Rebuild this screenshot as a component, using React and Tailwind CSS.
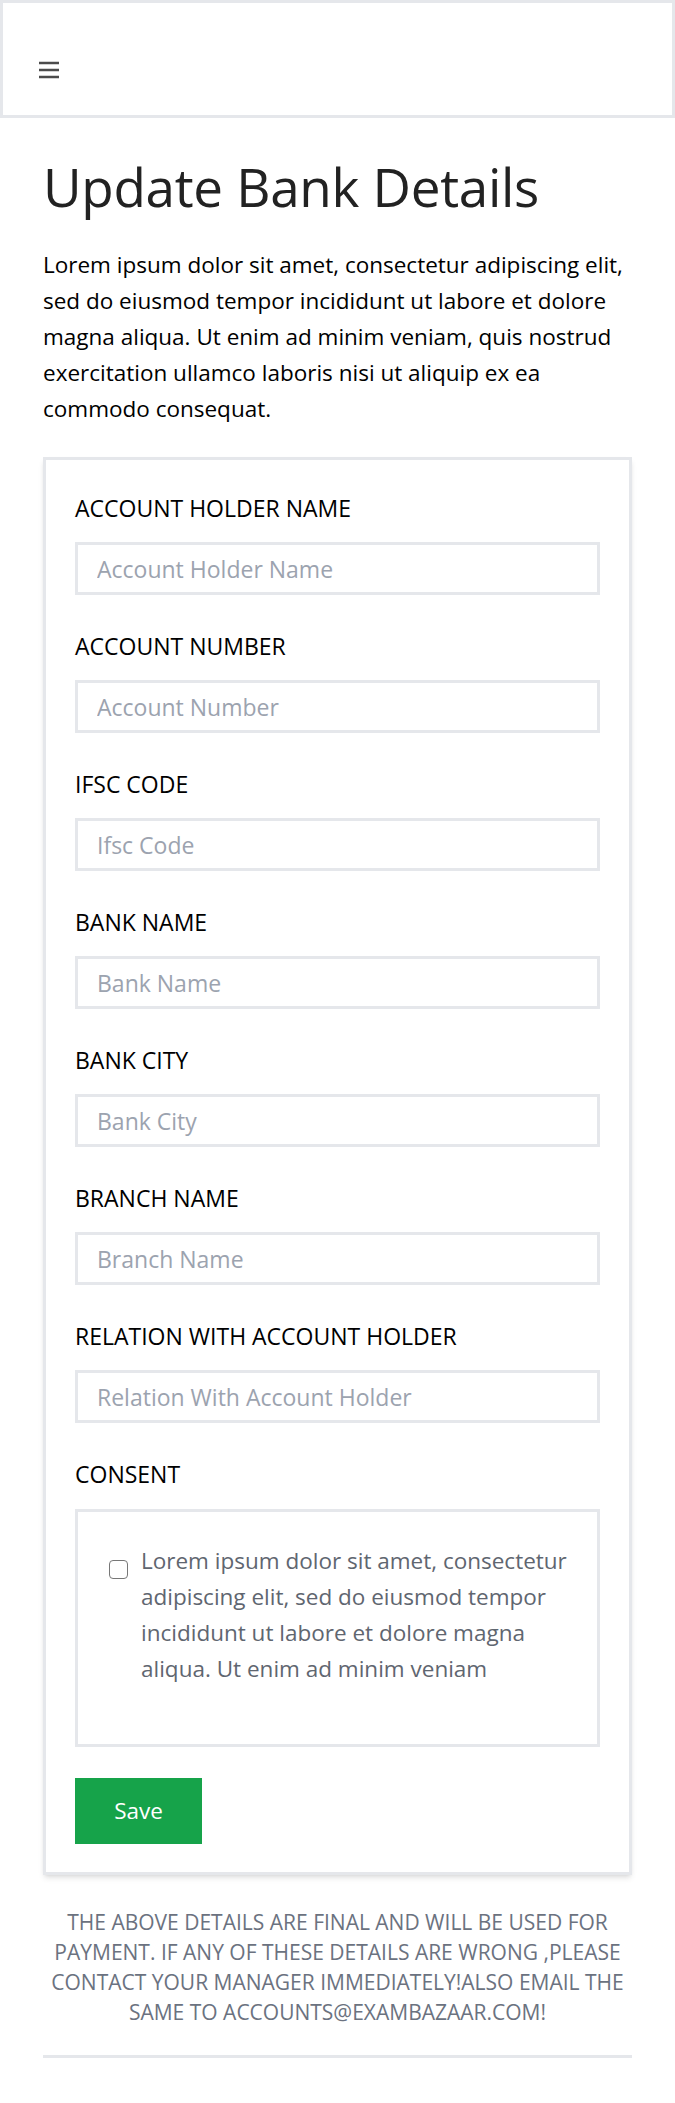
import React from 'react';

const FIELDS = [
  'Account Holder Name',
  'Account Number',
  'Ifsc Code',
  'Bank Name',
  'Bank City',
  'Branch Name',
  'Relation With Account Holder'
];

function Hamburger() {
  return (
    <svg width="20" height="18" viewBox="0 0 20 18" className="text-[#4b4b4b]">
      <line x1="0" y1="2" x2="20" y2="2" stroke="currentColor" strokeWidth="2.5" />
      <line x1="0" y1="9" x2="20" y2="9" stroke="currentColor" strokeWidth="2.5" />
      <line x1="0" y1="16" x2="20" y2="16" stroke="currentColor" strokeWidth="2.5" />
    </svg>
  );
}

export default function App() {
  return (
    <div className="min-h-screen bg-white font-['Open_Sans',sans-serif]">
      <header className="h-[118px] border-[3px] border-[#e5e7eb] pl-[36px] pt-[58px]">
        <button type="button" className="block">
          <Hamburger />
        </button>
      </header>

      <main className="px-[43px] pb-[42px]">
        <h1 className="mt-[35px] text-[53px] leading-[67px] font-medium text-[#222] tracking-[-0.3px]">Update Bank Details</h1>
        <p className="mt-[27px] text-[22.5px] leading-[36px] text-black">
          Lorem ipsum dolor sit amet, consectetur adipiscing elit, sed do eiusmod tempor incididunt ut labore et dolore magna aliqua. Ut enim ad minim veniam, quis nostrud exercitation ullamco laboris nisi ut aliquip ex ea commodo consequat.
        </p>

        <form onSubmit={(e) => e.preventDefault()}
          className="mt-[30px] border-[3px] border-[#e5e7eb] shadow-md px-[29px] pt-[32px] pb-[28px]">
          <div className="flex flex-col gap-[35px]">
            {FIELDS.map(f => (
              <div key={f}>
                <label className="block text-[23px] leading-[33px] text-black uppercase">{f}</label>
                <input type="text" placeholder={f}
                  className="mt-[17px] block w-full h-[53px] border-[3px] border-[#e5e7eb] px-[19px] text-[23px] text-black placeholder:text-[#9ca3af] outline-none" />
              </div>
            ))}
            <div>
              <label className="block text-[23px] leading-[33px] text-black uppercase">Consent</label>
              <div className="mt-[18px] h-[238px] border-[3px] border-[#e5e7eb] pl-[31px] pr-[16px] pt-[31px] flex gap-[13px]">
                <input type="checkbox" className="mt-[17px] w-[19px] h-[19px] shrink-0 appearance-none rounded-[4px] border-[1.5px] border-[#777] bg-white" />
                <p className="text-[22.5px] leading-[36px] text-[#5f6670]">
                  Lorem ipsum dolor sit amet, consectetur adipiscing elit, sed do eiusmod tempor incididunt ut labore et dolore magna aliqua. Ut enim ad minim veniam
                </p>
              </div>
            </div>
          </div>
          <button type="submit" className="mt-[31px] h-[66px] w-[127px] bg-[#16a34a] text-white text-[22.5px]">Save</button>
        </form>

        <p className="mt-[32px] text-center text-[21px] leading-[30px] text-[#6b7280] uppercase">
          The above details are final and will be used for payment. If any of these details are wrong ,please contact your manager immediately!also email the same to accounts@exambazaar.com!
        </p>

        <hr className="mt-[28px] border-t-[3px] border-[#e5e7eb]" />
      </main>
    </div>
  );
}
